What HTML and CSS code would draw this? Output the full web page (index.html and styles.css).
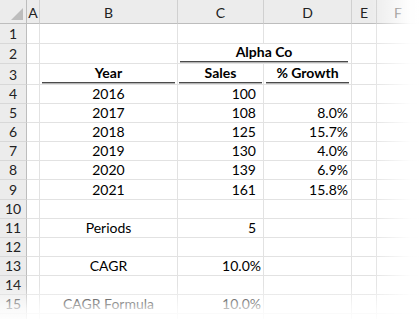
FILE: index.html
```html
<!DOCTYPE html>
<html>
<head>
<meta charset="utf-8">
<link rel="stylesheet" href="styles.css">
</head>
<body>
<div class="wrap">
  <div class="sheet">
    <!-- header row -->
    <div class="ch corner"><span class="tri"></span></div>
    <div class="ch">A</div>
    <div class="ch">B</div>
    <div class="ch">C</div>
    <div class="ch">D</div>
    <div class="ch">E</div>
    <div class="ch">F</div>

    <!-- row 1 -->
    <div class="rh">1</div><div class="c"></div><div class="c"></div><div class="c"></div><div class="c"></div><div class="c"></div><div class="c"></div>
    <!-- row 2 -->
    <div class="rh">2</div><div class="c"></div><div class="c"></div>
    <div class="c span2"><div class="ul b">Alpha Co</div></div>
    <div class="c"></div><div class="c"></div>
    <!-- row 3 -->
    <div class="rh">3</div><div class="c"></div>
    <div class="c"><div class="ul b ulb">Year</div></div>
    <div class="c"><div class="ul b ulc">Sales</div></div>
    <div class="c"><div class="ul b uld">% Growth</div></div>
    <div class="c"></div><div class="c"></div>
    <!-- rows 4-9 -->
    <div class="rh">4</div><div class="c"></div><div class="c ctr">2016</div><div class="c num">100</div><div class="c pct"></div><div class="c"></div><div class="c"></div>
    <div class="rh">5</div><div class="c"></div><div class="c ctr">2017</div><div class="c num">108</div><div class="c pct">8.0%</div><div class="c"></div><div class="c"></div>
    <div class="rh">6</div><div class="c"></div><div class="c ctr">2018</div><div class="c num">125</div><div class="c pct">15.7%</div><div class="c"></div><div class="c"></div>
    <div class="rh">7</div><div class="c"></div><div class="c ctr">2019</div><div class="c num">130</div><div class="c pct">4.0%</div><div class="c"></div><div class="c"></div>
    <div class="rh">8</div><div class="c"></div><div class="c ctr">2020</div><div class="c num">139</div><div class="c pct">6.9%</div><div class="c"></div><div class="c"></div>
    <div class="rh">9</div><div class="c"></div><div class="c ctr">2021</div><div class="c num">161</div><div class="c pct">15.8%</div><div class="c"></div><div class="c"></div>
    <div class="rh">10</div><div class="c"></div><div class="c"></div><div class="c"></div><div class="c"></div><div class="c"></div><div class="c"></div>
    <div class="rh">11</div><div class="c"></div><div class="c ctr">Periods</div><div class="c num">5</div><div class="c"></div><div class="c"></div><div class="c"></div>
    <div class="rh">12</div><div class="c"></div><div class="c"></div><div class="c"></div><div class="c"></div><div class="c"></div><div class="c"></div>
    <div class="rh">13</div><div class="c"></div><div class="c ctr">CAGR</div><div class="c pctc">10.0%</div><div class="c"></div><div class="c"></div><div class="c"></div>
    <div class="rh">14</div><div class="c"></div><div class="c"></div><div class="c"></div><div class="c"></div><div class="c"></div><div class="c"></div>
    <div class="rh">15</div><div class="c"></div><div class="c ctr">CAGR Formula</div><div class="c pctc">10.0%</div><div class="c"></div><div class="c"></div><div class="c"></div>
    <div class="rh"></div><div class="c"></div><div class="c"></div><div class="c"></div><div class="c"></div><div class="c"></div><div class="c"></div>
  </div>
  <div class="fade-right"></div>
  <div class="fade-bottom"></div>
</div>
</body>
</html>
```

FILE: styles.css
```css
* { box-sizing: border-box; }
html, body {
  margin: 0;
  padding: 0;
  background: #fff;
  overflow: hidden;
}
.wrap {
  position: relative;
  width: 420px;
  height: 319px;
  overflow: hidden;
}
.sheet {
  display: grid;
  grid-template-columns: 27px 13px 138px 86px 88px 25px 1fr;
  grid-template-rows: 24px 20px 20px 21px 19px 19px 19px 19px 19px 20px 19px 19px 19px 19px 19px 19px 19px;
  font-family: Lato, "Open Sans", sans-serif;
  font-size: 14px;
  color: #000;
}
.ch {
  background: #ececec;
  border-right: 1px solid #d0d0d0;
  border-bottom: 1px solid #bdbdbd;
  display: flex;
  align-items: flex-end;
  justify-content: center;
  padding-bottom: 3px;
  line-height: 15px;
  color: #222;
}
.corner {
  border-right: 1px solid #bdbdbd;
  position: relative;
}
.tri {
  position: absolute;
  right: 3px;
  bottom: 3px;
  width: 0;
  height: 0;
  border-left: 12px solid transparent;
  border-bottom: 12px solid #bdbdbd;
}
.rh {
  background: #ececec;
  border-right: 1px solid #bdbdbd;
  border-bottom: 1px solid #d8d8d8;
  display: flex;
  align-items: flex-end;
  justify-content: center;
  padding-bottom: 2px;
  line-height: 15px;
  color: #222;
}
.c {
  border-right: 1px solid #e2e2e2;
  border-bottom: 1px solid #e2e2e2;
  display: flex;
  align-items: flex-end;
  padding-bottom: 2px;
  line-height: 15px;
  white-space: nowrap;
}
.span2 { grid-column: span 2; }
.ctr { justify-content: center; }
.num { justify-content: flex-end; padding-right: 7px; }
.pct { justify-content: flex-end; padding-right: 3px; }
.pctc { justify-content: flex-end; padding-right: 2px; }
.b { font-weight: 700; }
.c:has(.ul) { padding-bottom: 0; }
.ul {
  flex: 1;
  text-align: center;
  margin: 0 3px 1px 2px;
  padding-bottom: 2px;
  border-bottom: 1px solid #4a4a4a;
  box-shadow: 0 1px 0 #b5b5b5;
}
.ulb { margin-left: 2px; margin-right: 2px; }
.ulc { margin-left: 1px; margin-right: 1px; }
.uld { margin-left: 2px; margin-right: 2px; }
.fade-right {
  position: absolute;
  top: 0;
  right: 0;
  width: 48px;
  height: 100%;
  background: linear-gradient(to right, rgba(255,255,255,0), rgba(255,255,255,0.95) 80%, #fff);
}
.fade-bottom {
  position: absolute;
  left: 0;
  bottom: 0;
  width: 100%;
  height: 34px;
  background: linear-gradient(to bottom, rgba(255,255,255,0), rgba(255,255,255,0.75) 70%, rgba(255,255,255,0.9));
}
```
